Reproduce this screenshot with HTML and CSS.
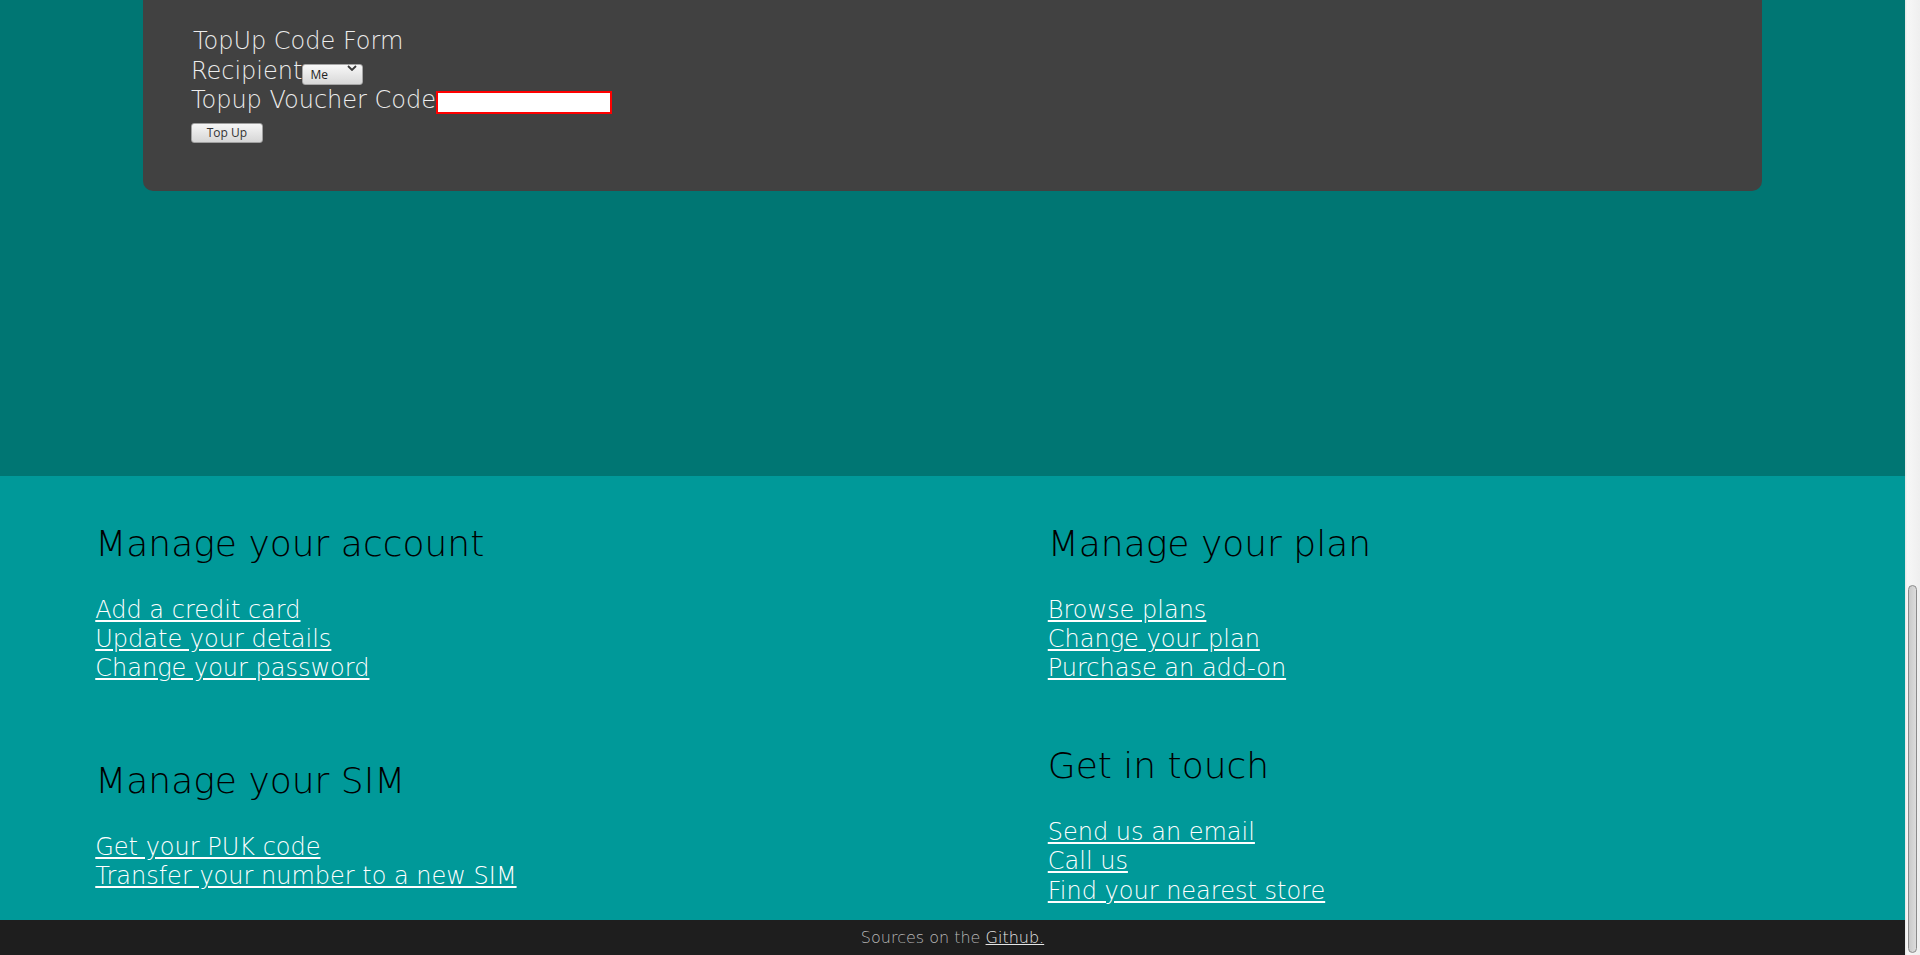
FILE: index.html
```html
<!DOCTYPE html>
<html lang="en">
<head>
<meta charset="utf-8">
<title>TopUp</title>
<link rel="stylesheet" href="styles.css">
</head>
<body>
<div class="page">
  <main class="main">
    <section class="card">
      <form class="topup-form">
        <div class="form-title">TopUp Code Form</div>
        <div class="form-row"><label class="form-label" for="recipient">Recipient</label><span class="select-wrap"><select id="recipient" class="select"><option>Me</option><option>Other</option></select><svg class="select-arrow" width="10" height="6" viewBox="0 0 10 6"><path d="M1 1l4 4 4-4" fill="none" stroke="#3a3a3a" stroke-width="1.8"/></svg></span></div>
        <div class="form-row"><label class="form-label" for="code">Topup Voucher Code</label><input id="code" class="code-input" type="text"></div>
        <div class="form-row"><button type="button" class="btn">Top Up</button></div>
      </form>
    </section>
  </main>
  <section class="links">
    <div class="links-col">
      <div class="link-group link-group-wide">
        <h2 class="link-title">Manage your account</h2>
        <ul class="link-list">
          <li><a href="#">Add a credit card</a></li>
          <li><a href="#">Update your details</a></li>
          <li><a href="#">Change your password</a></li>
        </ul>
      </div>
      <div class="link-group">
        <h2 class="link-title">Manage your SIM</h2>
        <ul class="link-list">
          <li><a href="#">Get your PUK code</a></li>
          <li><a href="#">Transfer your number to a new SIM</a></li>
        </ul>
      </div>
    </div>
    <div class="links-col">
      <div class="link-group link-group-narrow">
        <h2 class="link-title">Manage your plan</h2>
        <ul class="link-list">
          <li><a href="#">Browse plans</a></li>
          <li><a href="#">Change your plan</a></li>
          <li><a href="#">Purchase an add-on</a></li>
        </ul>
      </div>
      <div class="link-group">
        <h2 class="link-title">Get in touch</h2>
        <ul class="link-list">
          <li><a href="#">Send us an email</a></li>
          <li><a href="#">Call us</a></li>
          <li><a href="#">Find your nearest store</a></li>
        </ul>
      </div>
    </div>
  </section>
  <footer class="footer">Sources on the <a href="#">Github.</a></footer>
</div>
<div class="scrollbar" aria-hidden="true"><div class="scrollbar-thumb"></div></div>
</body>
</html>
```

FILE: styles.css
```css
html {
  background: #007673;
}
body {
  margin: 0;
  height: 100vh;
  display: flex;
  overflow: hidden;
  font-family: "DejaVu Sans", "Liberation Sans", sans-serif;
  font-weight: 200;
}
.page {
  flex: 1;
  min-width: 0;
  display: flex;
  flex-direction: column;
}
.main {
  flex: 1;
  min-height: 0;
  display: flex;
  flex-direction: column;
  background: #007673;
  padding-bottom: 285px;
}
.card {
  flex: 1;
  display: flex;
  flex-direction: column;
  justify-content: flex-end;
  width: 85%;
  margin: 0 auto;
  box-sizing: border-box;
  padding: 0 48px 46px;
  background: #414141;
  border-radius: 0 0 10px 10px;
  color: #ededed;
  font-size: 24px;
  line-height: 29.4px;
}
.topup-form {
  margin: 0;
}
.form-title {
  padding-left: 2px;
}
.select-wrap {
  position: relative;
  display: inline-block;
}
.select {
  -webkit-appearance: none;
  appearance: none;
  width: 61px;
  height: 21px;
  box-sizing: border-box;
  margin: 0;
  padding: 0 0 0 7px;
  border: 1px solid #a6a6a6;
  border-radius: 3px;
  background: linear-gradient(#f8f8f8, #d8d8d8);
  font: 12px "Open Sans", "Noto Sans", sans-serif;
  color: #222;
}
.select-arrow {
  position: absolute;
  right: 6px;
  top: 8px;
  pointer-events: none;
}
.code-input {
  width: 176px;
  height: 23px;
  box-sizing: border-box;
  margin: 0;
  padding: 1px 2px;
  border: 2px solid #ff0000;
  background: #fff;
  font: 13px "Open Sans", sans-serif;
}
.btn {
  width: 72px;
  height: 20px;
  box-sizing: border-box;
  margin: 0;
  padding: 0;
  border: 1px solid #a0a0a0;
  border-radius: 3px;
  background: linear-gradient(#f6f6f6, #d6d6d6);
  font: 12px "Open Sans", "Noto Sans", sans-serif;
  color: #333;
}
.links {
  flex: none;
  display: flex;
  background: #009999;
  padding: 16px 0 14px;
}
.links-col {
  flex: 0 0 50%;
  box-sizing: border-box;
  padding-left: 5%;
}
.link-title {
  margin: 29.88px 0;
  font-size: 36px;
  font-weight: 200;
  line-height: 1.225;
  color: #000;
}
.link-list {
  list-style: none;
  margin: 0;
  padding: 0;
  font-size: 24px;
  line-height: 29.4px;
}
.link-list a {
  color: #fff;
  text-decoration: underline;
}
.link-group-wide {
  margin-bottom: 75px;
}
.link-group-narrow {
  margin-bottom: 60px;
}
.footer {
  flex: none;
  height: 35px;
  line-height: 35px;
  background: #1e1e1e;
  color: #b8b8b8;
  font-size: 16px;
  text-align: center;
}
.footer a {
  color: #e6e6e6;
}
.scrollbar {
  flex: 0 0 15px;
  position: relative;
  background: linear-gradient(to right, #e4e4e4 0, #f7f7f7 2px, #efefef 100%);
}
.scrollbar-thumb {
  position: absolute;
  left: 3px;
  right: 3px;
  top: 585px;
  bottom: 2px;
  box-sizing: border-box;
  border: 1px solid #8a8a8a;
  border-radius: 5px;
  background: linear-gradient(to right, #c9c9c9, #dcdcdc);
}
```
